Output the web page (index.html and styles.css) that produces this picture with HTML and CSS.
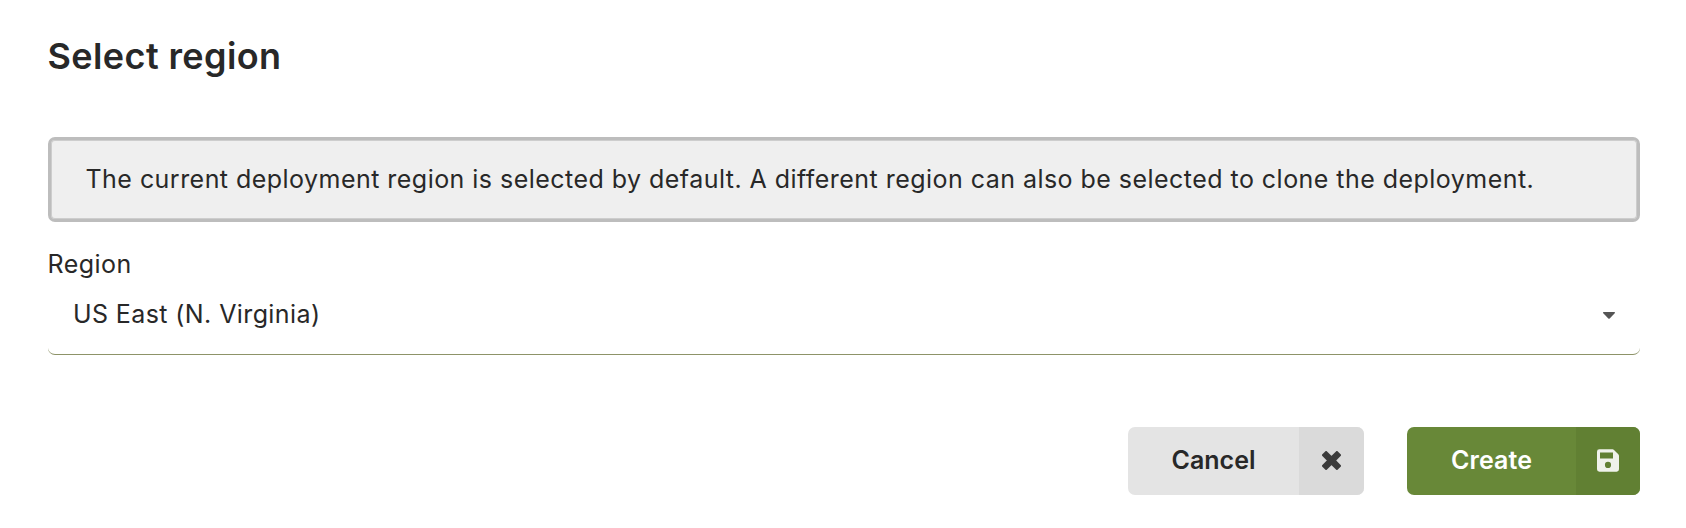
FILE: index.html
```html
<!DOCTYPE html>
<html lang="en">
<head>
<meta charset="utf-8">
<title>Select region</title>
<link rel="stylesheet" href="styles.css">
</head>
<body>
<main class="dialog">
  <h1 class="title">Select region</h1>
  <p class="notice">The current deployment region is selected by default. A different region can also be selected to clone the deployment.</p>
  <div class="label">Region</div>
  <div class="select">
    <span class="value">US East (N. Virginia)</span>
    <svg class="caret" viewBox="0 0 12 7"><path d="M.5 0h11q.8.5.2 1.200L6.700 6.500q-.7.7-1.400 0L.3 1.200Q-.3.5.5 0z"/></svg>
  </div>
  <div class="actions">
    <button class="button cancel"><span class="text">Cancel</span><span class="icon"><svg width="19" height="19" viewBox="0 0 19 19"><path stroke="currentColor" stroke-width="2.600" stroke-linejoin="round" d="M4.100 1.300 9.500 6.700 14.900 1.300 17.700 4.100 12.300 9.500 17.700 14.900 14.900 17.700 9.500 12.300 4.100 17.700 1.300 14.900 6.700 9.500 1.300 4.100z"/></svg></span></button>
    <button class="button create"><span class="text">Create</span><span class="icon"><svg width="22" height="23" viewBox="0 0 22 23"><path fill-rule="evenodd" d="M2.400.3h13.200a2 2 0 0 1 1.400.6l4.300 4.300a2.400 2.400 0 0 1 .7 1.700v13.400a2.400 2.400 0 0 1-2.400 2.400H2.400A2.400 2.400 0 0 1 0 20.300V2.700A2.400 2.400 0 0 1 2.400.3zM3 3.500v6h13v-6zM11 12.800a3.100 3.100 0 1 0 0 6.200 3.100 3.100 0 0 0 0-6.200z"/></svg></span></button>
  </div>
</main>
</body>
</html>
```
FILE: styles.css
```css
* { box-sizing: border-box; }
body { margin: 0; background: #fff; color: #282828; font-family: Inter, sans-serif; font-size: 25px; font-weight: 400; }
.dialog { height: 528px; padding: 34px 46px 0 48px; }
.title { margin: 0; font-size: 36px; line-height: 44px; font-weight: 600; letter-spacing: .4px; text-indent: -.5px; }
.notice { margin: 59px 0 0; height: 85px; border: 3px solid #bdbdbd; border-radius: 7px; background: #efefef; box-shadow: inset 0 0 0 1px #cdcdcd; padding: 0 35px; line-height: 79px; letter-spacing: .463px; white-space: nowrap; text-indent: -.5px; }
.label { margin-top: 27px; line-height: 30px; letter-spacing: .45px; text-indent: -.5px; }
.select { display: flex; align-items: center; justify-content: space-between; height: 76px; padding: 0 25px 5px 25px; border-bottom: 1px solid #8d9368; border-radius: 7px; letter-spacing: .4px; }
.caret { width: 12px; height: 7px; margin-top: 2px; fill: #555; }
.actions { display: flex; justify-content: flex-end; gap: 43px; margin-top: 72px; }
.button { display: flex; height: 68px; padding: 0; border: 0; border-radius: 7px; overflow: hidden; font: 600 25px Inter, sans-serif; }
.text { display: flex; align-items: center; justify-content: center; padding-bottom: 2px; }
.icon { display: flex; align-items: center; justify-content: center; width: 65px; padding-bottom: 1px; }
.icon svg { fill: currentColor; }
.cancel { background: #e4e4e4; color: #282828; }
.cancel .text { width: 171px; }
.cancel .icon { background: #dadada; color: #3b3b3b; }
.create { background: #688838; color: #fff; }
.create .text { width: 169px; letter-spacing: .1px; }
.create .icon { width: 64px; background: #618033; color: #eff2eb; }
```
